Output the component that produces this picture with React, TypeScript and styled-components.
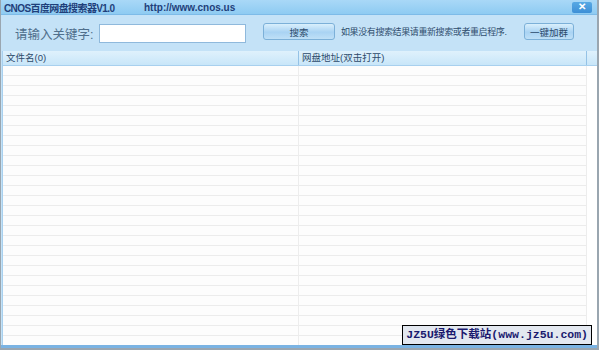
import React from 'react'
import styled, { createGlobalStyle } from 'styled-components'

const Global = createGlobalStyle`
  html, body { margin: 0; padding: 0; background: #ffffff; }
  body { font-family: "Liberation Sans", "Noto Sans CJK SC", sans-serif; }
`;

const Window = styled.div`
  width: 599px;
  height: 350px;
  box-sizing: border-box;
  display: flex;
  flex-direction: column;
  background: #c4e2f7;
  border-left: 1px solid #9aa6b0;
  border-right: 2px solid #9aa6b0;
  border-bottom: 2px solid #9aa6b0;
  position: relative;
  overflow: hidden;
`;

const TitleBar = styled.div`
  height: 14px;
  flex: none;
  display: flex;
  align-items: center;
  padding-left: 3px;
  background: linear-gradient(#a9d8f7, #8ecbf2);
  border-bottom: 1px solid #7dbbe8;
  font-size: 10px;
  font-weight: bold;
  color: #1f3f7a;
`;

const TitleText = styled.span<{ $w?: number; $ls?: number }>`
  width: ${p => (p.$w ? p.$w + 'px' : 'auto')};
  white-space: nowrap;
  letter-spacing: ${p => p.$ls ?? 0}px;
`;

const CloseBtn = styled.div`
  margin-left: auto;
  margin-right: 5px;
  width: 20px;
  height: 11px;
  background: linear-gradient(#58a9e4, #3d8fd6);
  border-radius: 2px;
  color: #fff;
  font-size: 10px;
  font-weight: bold;
  display: flex;
  align-items: center;
  justify-content: center;
  line-height: 1;
`;

const Toolbar = styled.div`
  height: 36px;
  flex: none;
  display: flex;
  align-items: center;
  padding-left: 14px;
`;

const Label = styled.span`
  flex: none;
  font-size: 12.5px;
  color: #4f6f8c;
  width: 84px;
  white-space: nowrap;
`;

const Input = styled.div`
  flex: none;
  width: 145px;
  height: 17px;
  background: #fff;
  border: 1px solid #8fb9dc;
`;

const Button = styled.div<{ $w: number; $ml: number }>`
  flex: none;
  width: ${p => p.$w}px;
  height: 17px;
  margin-left: ${p => p.$ml}px;
  box-sizing: border-box;
  border: 1px solid #7cb0d8;
  border-radius: 3px;
  background: linear-gradient(#d9effc, #a9d3f3 55%, #bfe0f7);
  display: flex;
  align-items: center;
  justify-content: center;
  font-size: 9.5px;
  color: #2c4a6a;
  margin-top: -3px;
  white-space: nowrap;
`;

const Hint = styled.span`
  flex: none;
  width: 177px;
  margin-left: 6px;
  font-size: 9px;
  letter-spacing: -0.4px;
  color: #2f4d6e;
  white-space: nowrap;
  margin-top: -3px;
`;

const TableWrap = styled.div`
  flex: 1;
  display: flex;
  margin-left: 1px;
  background: #fff;
`;

const Table = styled.div`
  width: 584px;
  display: flex;
  flex-direction: column;
  border-left: 1px solid #a8d0ee;
`;

const Header = styled.div`
  height: 14px;
  display: flex;
  background: linear-gradient(#dff1fc, #c8e6f9);
  border-bottom: 1px solid #a8d0ee;
`;

const HeadCell = styled.div<{ $w: number }>`
  width: ${p => p.$w}px;
  box-sizing: border-box;
  padding-left: 3px;
  border-right: 1px solid #94c2e6;
  font-size: 9.5px;
  color: #2c4a6a;
  line-height: 14px;
  white-space: nowrap;
`;

const Rows = styled.div`
  flex: 1;
  display: flex;
  background: repeating-linear-gradient(#fdfdfd 0 9px, #ececec 9px 10px);
`;

const Col = styled.div<{ $w: number }>`
  width: ${p => p.$w}px;
  border-right: 1px solid #ededed;
`;

const Side = styled.div`
  flex: 1;
  display: flex;
  flex-direction: column;
`;

const SideHead = styled.div`
  height: 14px;
  background: linear-gradient(#dff1fc, #c8e6f9);
  border-bottom: 1px solid #a8d0ee;
`;

const BottomBar = styled.div`
  height: 3px;
  flex: none;
  background: #7ab3e3;
`;

const Watermark = styled.div`
  position: absolute;
  right: 5px;
  bottom: 3px;
  height: 18px;
  padding: 0 3px;
  border: 1px solid #000;
  background: #e3e8f0;
  color: #1a1a6e;
  font-family: "Liberation Mono", "Noto Sans CJK SC", monospace;
  font-weight: bold;
  font-size: 11.5px;
  line-height: 18px;
  white-space: nowrap;
`;

export default function App() {
  return (
    <>
      <Global />
      <Window>
        <TitleBar>
          <TitleText $w={140} $ls={-0.6}>CNOS百度网盘搜索器V1.0</TitleText>
          <TitleText>http://www.cnos.us</TitleText>
          <CloseBtn>✕</CloseBtn>
        </TitleBar>
        <Toolbar>
          <Label>请输入关键字:</Label>
          <Input />
          <Button $w={72} $ml={17}>搜索</Button>
          <Hint>如果没有搜索结果请重新搜索或者重启程序.</Hint>
          <Button $w={50} $ml={6}>一键加群</Button>
        </Toolbar>
        <TableWrap>
          <Table>
            <Header>
              <HeadCell $w={296}>文件名(0)</HeadCell>
              <HeadCell $w={288}>网盘地址(双击打开)</HeadCell>
            </Header>
            <Rows>
              <Col $w={296} />
              <Col $w={288} />
            </Rows>
          </Table>
          <Side>
            <SideHead />
          </Side>
        </TableWrap>
        <BottomBar />
        <Watermark>JZ5U绿色下载站(www.jz5u.com)</Watermark>
      </Window>
    </>
  )
}
